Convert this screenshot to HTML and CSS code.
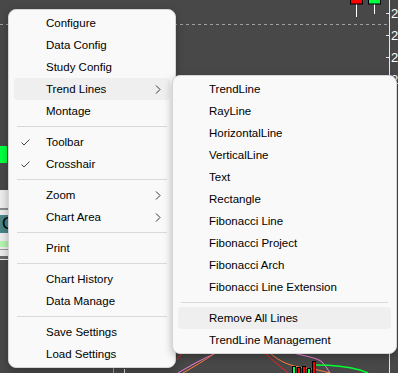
FILE: index.html
```html
<!DOCTYPE html>
<html lang="en">
<head>
    <meta charset="UTF-8">
    <title>Chart Context Menu</title>
    <link rel="stylesheet" href="styles.css">
</head>
<body>
    <!-- chart canvas behind the menus -->
    <svg class="chart" width="398" height="373" viewBox="0 0 398 373">
        <rect x="0" y="0" width="398" height="373" fill="#484848"/>
        <line x1="0" y1="24.5" x2="388" y2="24.5" stroke="#a0a0a0" stroke-dasharray="3 3"/>
        <line x1="389.5" y1="0" x2="389.5" y2="373" stroke="#e8e8e8"/>
        <g stroke="#e8e8e8">
            <line x1="386" y1="13.5" x2="389" y2="13.5"/>
            <line x1="386" y1="35.5" x2="389" y2="35.5"/>
            <line x1="386" y1="57.5" x2="389" y2="57.5"/>
        </g>
        <g class="axis-label">
            <text x="391" y="18">2</text>
            <text x="391" y="40">2</text>
            <text x="391" y="62">2</text>
            <text x="391" y="84">2</text>
        </g>
        <line x1="356.5" y1="4" x2="356.5" y2="17" stroke="#fff"/>
        <rect x="350.5" y="-1" width="12" height="5" fill="#ff0000" stroke="#000"/>
        <line x1="374.5" y1="4" x2="374.5" y2="14" stroke="#fff"/>
        <rect x="368.5" y="-1" width="12" height="5" fill="#00ff40" stroke="#000"/>

        <!-- left panel strip -->
        <rect x="0" y="146" width="7" height="17" fill="#00ff40"/>
        <rect x="0" y="190" width="9" height="70" fill="#ececec"/>
        <rect x="0" y="208" width="9" height="2" fill="#8a8a8a"/>
        <rect x="0" y="215" width="9" height="18" fill="#4a8585"/>
        <text class="panel-letter" x="2" y="229">C</text>
        <rect x="0" y="241" width="9" height="6" fill="#b4f5b0"/>
        <rect x="0" y="249" width="9" height="1" fill="#9a9a9a"/>
        <rect x="0" y="256" width="9" height="3" fill="#6a6a6a"/>

        <!-- lower chart lines -->
        <path d="M178 373 C190 366 200 360 216 353" fill="none" stroke="#ff7fe0"/>
        <path d="M183 373 C195 366 205 360 214 354" fill="none" stroke="#ff8040"/>
        <path d="M177 360 C179 356 181 354 184 353" fill="none" stroke="#ff2020"/>
        <path d="M265 353 C272 360 280 366 288 373" fill="none" stroke="#ff2020"/>
        <path d="M270 353 C280 362 290 366 305 368 C315 369 322 371 330 373" fill="none" stroke="#ff8040"/>
        <path d="M293 353 C305 356 318 358 322 362 C326 366 328 370 330 373" fill="none" stroke="#ff7fe0"/>
        <path d="M316 365 C330 365 345 366 360 370 L368 373" fill="none" stroke="#00ff30" stroke-width="1.5"/>
        <g stroke="#000">
            <rect x="292.5" y="366.5" width="3" height="8" fill="#00ff40"/>
            <rect x="297.5" y="367.5" width="3" height="7" fill="#ff0000"/>
            <rect x="302.5" y="366.5" width="3" height="8" fill="#ff0000"/>
            <rect x="307.5" y="368.5" width="3" height="6" fill="#00ff40"/>
            <rect x="312.5" y="361.5" width="3" height="13" fill="#ff0000"/>
        </g>
        <line x1="113.5" y1="367" x2="113.5" y2="373" stroke="#00ff40"/>
        <line x1="124.5" y1="369" x2="124.5" y2="373" stroke="#e0e0e0"/>
    </svg>

    <ul class="menu main-menu">
        <li class="item">Configure</li>
        <li class="item">Data Config</li>
        <li class="item">Study Config</li>
        <li class="item active">Trend Lines
            <svg class="arrow" width="6" height="9" viewBox="0 0 6 9"><path d="M1 0.5 L5 4.5 L1 8.5" fill="none" stroke="#333" stroke-width="1"/></svg>
        </li>
        <li class="item">Montage</li>
        <li class="sep"></li>
        <li class="item">
            <svg class="check" width="9" height="7" viewBox="0 0 9 7"><path d="M0.5 3.5 L3 6 L8.5 0.5" fill="none" stroke="#444" stroke-width="1"/></svg>
            Toolbar
        </li>
        <li class="item">
            <svg class="check" width="9" height="7" viewBox="0 0 9 7"><path d="M0.5 3.5 L3 6 L8.5 0.5" fill="none" stroke="#444" stroke-width="1"/></svg>
            Crosshair
        </li>
        <li class="sep"></li>
        <li class="item">Zoom
            <svg class="arrow" width="6" height="9" viewBox="0 0 6 9"><path d="M1 0.5 L5 4.5 L1 8.5" fill="none" stroke="#333" stroke-width="1"/></svg>
        </li>
        <li class="item">Chart Area
            <svg class="arrow" width="6" height="9" viewBox="0 0 6 9"><path d="M1 0.5 L5 4.5 L1 8.5" fill="none" stroke="#333" stroke-width="1"/></svg>
        </li>
        <li class="sep"></li>
        <li class="item">Print</li>
        <li class="sep"></li>
        <li class="item">Chart History</li>
        <li class="item">Data Manage</li>
        <li class="sep"></li>
        <li class="item">Save Settings</li>
        <li class="item">Load Settings</li>
    </ul>

    <ul class="menu sub-menu">
        <li class="item">TrendLine</li>
        <li class="item">RayLine</li>
        <li class="item">HorizontalLine</li>
        <li class="item">VerticalLine</li>
        <li class="item">Text</li>
        <li class="item">Rectangle</li>
        <li class="item">Fibonacci Line</li>
        <li class="item">Fibonacci Project</li>
        <li class="item">Fibonacci Arch</li>
        <li class="item">Fibonacci Line Extension</li>
        <li class="sep"></li>
        <li class="item active">Remove All Lines</li>
        <li class="item">TrendLine Management</li>
    </ul>
</body>
</html>
```

FILE: styles.css
```css
/* Global */
body {
    margin: 0;
    width: 398px;
    height: 373px;
    overflow: hidden;
    position: relative;
    background-color: #484848;
    font-family: 'Liberation Sans', Arial, sans-serif;
    font-size: 11.5px;
    color: #000;
}

/* Chart canvas */
.chart {
    position: absolute;
    top: 0;
    left: 0;
    display: block;
}

.axis-label text {
    font-family: 'Liberation Sans', Arial, sans-serif;
    font-size: 13px;
    fill: #ffffff;
}

.panel-letter {
    font-family: 'Liberation Sans', Arial, sans-serif;
    font-size: 17px;
    fill: #000;
}

/* Context menus */
.menu {
    position: absolute;
    margin: 0;
    padding: 2px 0;
    list-style: none;
    background-color: #f9f9f9;
    border: 1px solid #d6d6d6;
    border-radius: 8px;
    box-shadow: 0 3px 8px rgba(0, 0, 0, 0.28);
}

.main-menu {
    left: 8px;
    top: 9px;
    width: 166px;
}

.sub-menu {
    left: 172px;
    top: 75px;
    width: 223px;
}

.item {
    position: relative;
    height: 22px;
    line-height: 22px;
    margin: 0 5px;
    padding-left: 32px;
    border-radius: 4px;
    white-space: nowrap;
}

.sub-menu .item {
    padding-left: 31px;
}

.item.active {
    background-color: #efefef;
}

.sep {
    height: 1px;
    margin: 4px 8px;
    background-color: #d9d9d9;
}

.check {
    position: absolute;
    left: 7px;
    top: 8px;
}

.arrow {
    position: absolute;
    right: 9px;
    top: 7px;
}
```
